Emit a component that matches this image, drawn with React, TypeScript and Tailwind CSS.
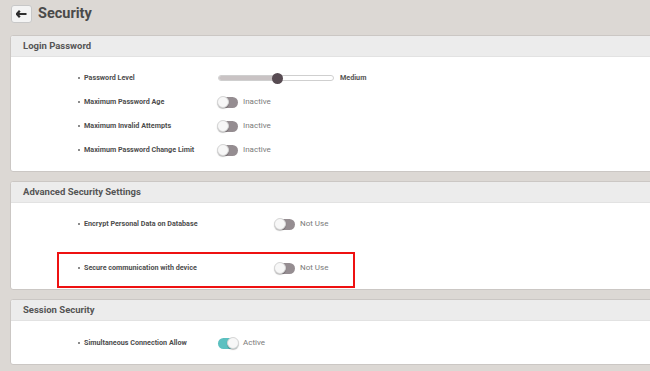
import React from "react";

const font = { fontFamily: "Roboto, 'Liberation Sans', sans-serif" };

function Toggle({ on }: { on?: boolean }) {
  return (
    <span
      className={
        "relative inline-block w-[20px] h-[11px] rounded-full shrink-0 " +
        (on ? "bg-[#5cc0c0]" : "bg-[#958d91]")
      }
    >
      <span
        className={
          "absolute top-[-0.5px] w-[12px] h-[12px] rounded-full bg-[#f7f7f7] border border-[#d6d6d6] shadow-[0_1px_1px_rgba(0,0,0,0.25)] " +
          (on ? "right-[-1px]" : "left-[-1px]")
        }
      />
    </span>
  );
}

function Label({ text, width }: { text: string; width: string }) {
  return (
    <div className={"flex items-center shrink-0 " + width}>
      <span className="w-[2px] h-[2px] rounded-full bg-[#666] mr-[4px]" />
      <span className="text-[7.2px] font-bold text-[#4d4d4d]">{text}</span>
    </div>
  );
}

function ToggleRow({ label, status, on, width }: { label: string; status: string; on?: boolean; width: string }) {
  return (
    <div className="flex items-center h-[24px]">
      <Label text={label} width={width} />
      <Toggle on={on} />
      <span className="ml-[5px] text-[8px] text-[#7a7a7a]">{status}</span>
    </div>
  );
}

function Card({ title, children }: { title: string; children: React.ReactNode }) {
  return (
    <div className="mr-[-12px] bg-white border border-[#cbc7c4] rounded-[3px] overflow-hidden">
      <div className="h-[21px] bg-[#ececec] border-b border-[#e2e2e2] flex items-center pl-[12px]">
        <span className="text-[9.5px] font-bold text-[#555]">{title}</span>
      </div>
      {children}
    </div>
  );
}

export default function App() {
  return (
    <div style={font} className="w-[650px] h-[371px] overflow-hidden bg-[#dcd8d4] pl-[10px]">
      <div className="flex items-center h-[18px] mt-[5px] mb-[12px]">
        <button className="ml-[1px] w-[21px] h-[18px] rounded-[3px] bg-[#f4f4f4] border border-[#c8c8c8] flex items-center justify-center">
          <svg width="11" height="8" viewBox="0 0 11 8">
            <path d="M3.8 0.8 L0.9 4 L3.8 7.2 M1 4 H10.5" stroke="#2f2f2f" strokeWidth="2.2" fill="none" />
          </svg>
        </button>
        <span className="ml-[6px] text-[14.5px] font-bold text-[#4a4a4a]">Security</span>
      </div>

      <div className="flex flex-col gap-[9px]">
        <Card title="Login Password">
          <div className="pl-[67px] pt-[9px] pb-[9px]">
            <div className="flex items-center h-[24px]">
              <Label text="Password Level" width="w-[140px]" />
              <div className="relative w-[116px] h-[6px] rounded-full border border-[#cfcfcf] bg-white">
                <div className="absolute left-0 top-0 bottom-0 w-[59px] rounded-l-full bg-[#c9c3c4]" />
                <div className="absolute left-[53px] top-[-3.5px] w-[11px] h-[11px] rounded-full bg-[#574b52]" />
              </div>
              <span className="ml-[6px] text-[7.2px] font-bold text-[#555]">Medium</span>
            </div>
            <ToggleRow label="Maximum Password Age" status="Inactive" width="w-[140px]" />
            <ToggleRow label="Maximum Invalid Attempts" status="Inactive" width="w-[140px]" />
            <ToggleRow label="Maximum Password Change Limit" status="Inactive" width="w-[140px]" />
          </div>
        </Card>

        <Card title="Advanced Security Settings">
          <div className="pt-[9px] pb-[1px]">
            <div className="pl-[67px]">
              <ToggleRow label="Encrypt Personal Data on Database" status="Not Use" width="w-[197px]" />
            </div>
            <div className="ml-[46px] mt-[16px] w-[298px] border-2 border-[#ee1111] pl-[19px] pt-[2px] pb-[6px]">
              <ToggleRow label="Secure communication with device" status="Not Use" width="w-[197px]" />
            </div>
          </div>
        </Card>

        <Card title="Session Security">
          <div className="pl-[67px] pt-[10px] pb-[9px]">
            <ToggleRow label="Simultaneous Connection Allow" status="Active" on width="w-[140px]" />
          </div>
        </Card>
      </div>
    </div>
  );
}
